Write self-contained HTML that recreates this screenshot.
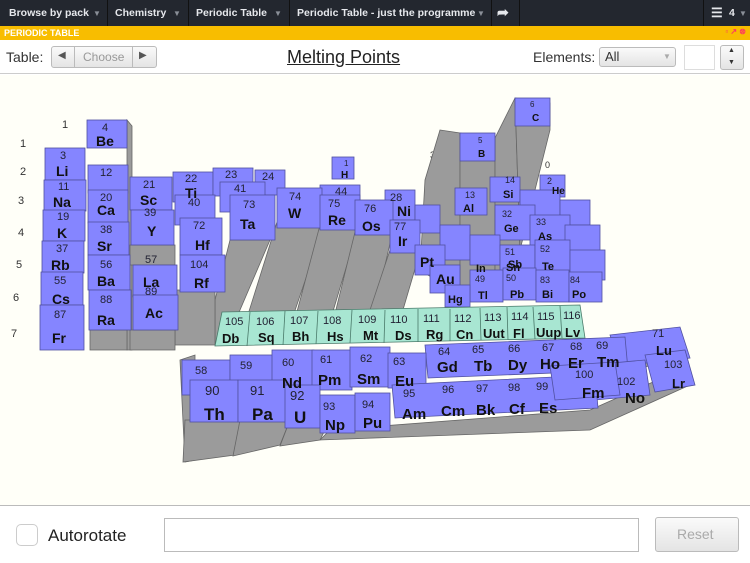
<!DOCTYPE html>
<html><head><meta charset="utf-8"><style>
*{margin:0;padding:0;box-sizing:border-box}
body{width:750px;height:563px;overflow:hidden;background:#fff;font-family:"Liberation Sans",sans-serif;position:relative}
.top{position:absolute;left:0;top:0;width:750px;height:26px;background:#23272f;color:#e6e8ec;font-size:10.5px;font-weight:bold}
.top span{position:absolute;top:7px}
.sep{position:absolute;top:0;width:1px;height:26px;background:#111}
.tri{color:#8a8f98;font-size:8px}
.bar{position:absolute;left:0;top:26px;width:750px;height:14px;background:#f8bd00;color:#fff;font-size:9px;font-weight:bold;padding:2px 0 0 4px}
.tb{position:absolute;left:0;top:40px;width:750px;height:34px;background:#fff;border-bottom:1px solid #ccc;font-size:14px;color:#333}
.canvas{position:absolute;left:0;top:75px;width:750px;height:431px;background:#fffff8;border-bottom:1px solid #bbb}
.foot{position:absolute;left:0;top:507px;width:750px;height:56px;background:#fff}
.btn{position:absolute;border:1px solid #bbb;border-radius:3px;background:linear-gradient(#fafafa,#e4e4e4)}
svg text{font-family:"Liberation Sans",sans-serif}
.n{font-size:11px;fill:#223}
.s{font-size:15px;font-weight:bold;fill:#111}
</style></head><body>
<div class="top">
<span style="left:9px">Browse by pack</span><span class="tri" style="left:93px;top:9px">▼</span><div class="sep" style="left:107px"></div>
<span style="left:115px">Chemistry</span><span class="tri" style="left:173px;top:9px">▼</span><div class="sep" style="left:188px"></div>
<span style="left:196px">Periodic Table</span><span class="tri" style="left:274px;top:9px">▼</span><div class="sep" style="left:289px"></div>
<span style="left:297px">Periodic Table - just the programme</span><span class="tri" style="left:477px;top:9px">▼</span><div class="sep" style="left:491px"></div>
<span style="left:497px;top:4px;font-size:14px">➦</span><div class="sep" style="left:519px"></div>
<div class="sep" style="left:703px"></div>
<span style="left:711px;top:5px;font-size:13px">☰</span><span style="left:729px">4</span><span class="tri" style="left:739px;top:9px">▼</span>
</div>
<div class="bar">PERIODIC TABLE<span style="position:absolute;right:4px;top:1px;color:#f36;font-size:8px">▫ ↗ ⊗</span></div>
<div class="tb">
<span style="position:absolute;left:6px;top:9px">Table:</span>
<div class="btn" style="left:51px;top:6px;width:106px;height:22px"></div>
<div style="position:absolute;left:74px;top:7px;width:1px;height:20px;background:#bbb"></div>
<div style="position:absolute;left:132px;top:7px;width:1px;height:20px;background:#bbb"></div>
<span style="position:absolute;left:58px;top:10px;font-size:10px;color:#555">◀</span>
<span style="position:absolute;left:83px;top:10px;font-size:12px;color:#999">Choose</span>
<span style="position:absolute;left:139px;top:10px;font-size:10px;color:#555">▶</span>
<span style="position:absolute;left:287px;top:7px;font-size:18px;color:#222;text-decoration:underline">Melting Points</span>
<span style="position:absolute;left:533px;top:9px">Elements:</span>
<div class="btn" style="left:599px;top:7px;width:77px;height:20px"></div>
<span style="position:absolute;left:605px;top:9px;font-size:13px">All</span>
<span style="position:absolute;left:663px;top:12px;font-size:8px;color:#aaa">▼</span>
<div style="position:absolute;left:684px;top:5px;width:31px;height:25px;border:1px solid #ddd"></div>
<div class="btn" style="left:720px;top:5px;width:24px;height:25px"></div>
<span style="position:absolute;left:728px;top:7px;font-size:7px">▲</span>
<span style="position:absolute;left:728px;top:19px;font-size:7px">▼</span>
</div>
<div class="canvas">
<svg width="750" height="431" viewBox="0 75 750 431">
<g font-size="11" fill="#333">
<text x="62" y="128">1</text><text x="20" y="147">1</text><text x="20" y="175">2</text><text x="18" y="204">3</text><text x="18" y="236">4</text><text x="16" y="268">5</text><text x="13" y="301">6</text><text x="11" y="337">7</text>
<text x="430" y="158" font-size="9">3</text><text x="545" y="168" font-size="9">0</text>
</g>
<g fill="#9b9b9b" stroke="#666" stroke-width="0.8">
<!-- tall columns -->
<polygon points="127,120 127,350 132,350 132,126"/>
<polygon points="230,240 270,240 225,345 215,345 215,300"/>
<polygon points="277,222 325,222 285,340 240,340"/>
<polygon points="320,225 358,228 325,338 290,338"/>
<polygon points="355,232 392,235 370,330 330,334"/>
<polygon points="390,250 420,252 400,320 365,325"/>
<polygon points="440,130 460,133 460,295 420,270 425,180"/>
<polygon points="460,133 495,138 495,290 460,295"/>
<polygon points="495,138 515,98 520,250 495,290"/>
<polygon points="515,98 550,103 550,130 520,250"/>
<polygon points="180,360 195,355 195,460 185,462"/>
<polygon points="185,420 240,420 235,455 183,462"/>
<polygon points="240,420 290,420 280,445 233,456"/>
<polygon points="290,420 330,420 320,440 280,446"/>
<polygon points="330,430 590,410 680,370 690,385 590,430 320,440"/>
<polygon points="640,345 660,335 660,360 640,370"/>
<polygon points="130,245 175,245 175,265 130,265"/>
<polygon points="175,290 215,290 215,345 175,345"/>
<polygon points="130,330 175,330 175,350 130,350"/>
<polygon points="90,330 127,330 127,350 90,350"/>
</g>
<g stroke="#5050a0" stroke-width="0.8" fill="#8585ff">
<rect x="87" y="120" width="40" height="28"/>
<rect x="332" y="157" width="22" height="22"/>
<rect x="460" y="133" width="35" height="28"/>
<rect x="515" y="98" width="35" height="28"/>
<rect x="540" y="175" width="25" height="22"/>
<rect x="490" y="177" width="30" height="25"/>
<rect x="455" y="188" width="32" height="27"/>
<rect x="45" y="148" width="40" height="32"/>
<rect x="88" y="165" width="40" height="28"/>
<rect x="130" y="177" width="42" height="33"/>
<rect x="173" y="172" width="40" height="30"/>
<rect x="213" y="168" width="40" height="28"/>
<rect x="255" y="170" width="30" height="25"/>
<rect x="320" y="185" width="40" height="30"/>
<rect x="385" y="190" width="30" height="30"/>
<rect x="415" y="205" width="25" height="28"/>
<rect x="520" y="190" width="40" height="30"/>
<rect x="560" y="200" width="30" height="25"/>
<rect x="44" y="180" width="42" height="31"/>
<rect x="88" y="190" width="40" height="33"/>
<rect x="175" y="195" width="40" height="30"/>
<rect x="220" y="182" width="45" height="30"/>
<rect x="131" y="210" width="43" height="35"/>
<rect x="495" y="205" width="40" height="35"/>
<rect x="530" y="215" width="40" height="35"/>
<rect x="565" y="225" width="35" height="30"/>
<rect x="440" y="225" width="30" height="35"/>
<rect x="470" y="235" width="30" height="30"/>
<rect x="43" y="210" width="42" height="31"/>
<rect x="88" y="222" width="41" height="33"/>
<rect x="180" y="218" width="42" height="37"/>
<rect x="230" y="195" width="45" height="45"/>
<rect x="277" y="188" width="45" height="40"/>
<rect x="320" y="195" width="40" height="35"/>
<rect x="355" y="200" width="38" height="35"/>
<rect x="390" y="220" width="30" height="33"/>
<rect x="415" y="245" width="30" height="30"/>
<rect x="500" y="245" width="35" height="35"/>
<rect x="535" y="240" width="35" height="35"/>
<rect x="570" y="250" width="35" height="30"/>
<rect x="42" y="241" width="42" height="32"/>
<rect x="88" y="255" width="42" height="35"/>
<rect x="133" y="265" width="44" height="32"/>
<rect x="180" y="255" width="45" height="37"/>
<rect x="430" y="265" width="30" height="28"/>
<rect x="470" y="270" width="33" height="32"/>
<rect x="503" y="268" width="33" height="32"/>
<rect x="536" y="270" width="33" height="32"/>
<rect x="569" y="272" width="33" height="30"/>
<rect x="445" y="285" width="25" height="22"/>
<rect x="41" y="272" width="42" height="33"/>
<rect x="133" y="295" width="45" height="35"/>
<rect x="40" y="305" width="44" height="45"/>
<rect x="89" y="290" width="42" height="40"/>
</g>
<g fill="#a8e6d2" stroke="#4a7a6a" stroke-width="0.8">
<polygon points="222,312 580,305 585,338 215,346"/>
</g>
<g stroke="#4a7a6a" stroke-width="0.8">
<line x1="250" y1="312" x2="247" y2="346"/><line x1="285" y1="311" x2="283" y2="345"/><line x1="318" y1="311" x2="316" y2="344"/><line x1="352" y1="310" x2="350" y2="343"/><line x1="385" y1="310" x2="384" y2="343"/><line x1="418" y1="309" x2="418" y2="342"/><line x1="450" y1="309" x2="450" y2="341"/><line x1="480" y1="308" x2="481" y2="340"/><line x1="507" y1="307" x2="508" y2="340"/><line x1="533" y1="307" x2="535" y2="339"/><line x1="560" y1="306" x2="562" y2="338"/>
</g>
<g class="n" font-size="11" fill="#334">
<text x="225" y="325">105</text><text x="256" y="325">106</text><text x="290" y="324">107</text><text x="323" y="324">108</text><text x="358" y="323">109</text><text x="390" y="323">110</text><text x="423" y="322">111</text><text x="454" y="322">112</text><text x="484" y="321">113</text><text x="511" y="320">114</text><text x="537" y="320">115</text><text x="563" y="319">116</text>
</g>
<g font-size="13" font-weight="bold" fill="#111">
<text x="222" y="343">Db</text><text x="258" y="342">Sq</text><text x="292" y="341">Bh</text><text x="327" y="341">Hs</text><text x="363" y="340">Mt</text><text x="395" y="340">Ds</text><text x="426" y="339">Rg</text><text x="456" y="339">Cn</text><text x="483" y="338">Uut</text><text x="513" y="338">Fl</text><text x="536" y="337">Uup</text><text x="565" y="337">Lv</text>
</g>
<!-- f-block -->
<g stroke="#5050a0" stroke-width="0.8" fill="#8585ff">
<polygon points="610,335 680,327 690,358 620,366"/>
<polygon points="645,355 685,350 695,385 655,392"/>
<polygon points="425,345 625,337 628,370 428,378"/>
<polygon points="590,365 645,360 650,395 595,400"/>
<rect x="182" y="360" width="48" height="35"/>
<rect x="230" y="355" width="45" height="35"/>
<rect x="272" y="350" width="42" height="40"/>
<rect x="312" y="350" width="40" height="40"/>
<rect x="350" y="347" width="40" height="40"/>
<rect x="388" y="353" width="38" height="35"/>
<rect x="190" y="380" width="48" height="42"/>
<rect x="238" y="380" width="48" height="42"/>
<rect x="285" y="385" width="35" height="43"/>
<rect x="320" y="395" width="35" height="38"/>
<rect x="355" y="393" width="35" height="38"/>
<polygon points="392,385 595,375 598,408 395,418"/>
<polygon points="550,366 615,362 620,395 555,400"/>
</g>
<g font-size="11" fill="#223">
<text x="195" y="374">58</text><text x="240" y="369">59</text><text x="282" y="366">60</text><text x="320" y="363">61</text><text x="360" y="362">62</text><text x="393" y="365">63</text>
<text x="438" y="355">64</text><text x="472" y="353">65</text><text x="508" y="352">66</text><text x="542" y="351">67</text><text x="570" y="350">68</text><text x="596" y="349">69</text><text x="652" y="337">71</text><text x="664" y="368">103</text>
<text x="205" y="395" font-size="13">90</text><text x="250" y="395" font-size="13">91</text><text x="290" y="400" font-size="13">92</text><text x="323" y="410">93</text><text x="362" y="408">94</text><text x="403" y="397">95</text><text x="442" y="393">96</text><text x="476" y="392">97</text><text x="508" y="391">98</text><text x="536" y="390">99</text><text x="575" y="378">100</text><text x="617" y="385">102</text>
</g>
<g font-size="15" font-weight="bold" fill="#111">
<text x="282" y="388">Nd</text><text x="318" y="385">Pm</text><text x="357" y="384">Sm</text><text x="395" y="386">Eu</text>
<text x="437" y="372">Gd</text><text x="474" y="371">Tb</text><text x="508" y="370">Dy</text><text x="540" y="369">Ho</text><text x="568" y="368">Er</text><text x="597" y="367">Tm</text><text x="656" y="355" font-size="13">Lu</text><text x="672" y="388" font-size="13">Lr</text>
<text x="204" y="420" font-size="17">Th</text><text x="252" y="420" font-size="17">Pa</text><text x="294" y="423" font-size="17">U</text><text x="325" y="430">Np</text><text x="363" y="428">Pu</text><text x="402" y="419">Am</text><text x="441" y="416">Cm</text><text x="476" y="415">Bk</text><text x="509" y="414">Cf</text><text x="539" y="413">Es</text><text x="582" y="398">Fm</text><text x="625" y="403">No</text>
</g>
<!-- main tile labels -->
<g font-size="11" fill="#223">
<text x="102" y="131">4</text><text x="344" y="166" font-size="8">1</text><text x="478" y="143" font-size="8">5</text><text x="530" y="107" font-size="8">6</text>
<text x="60" y="159">3</text><text x="100" y="176">12</text><text x="143" y="188">21</text><text x="185" y="182">22</text><text x="225" y="178">23</text><text x="390" y="201">28</text>
<text x="58" y="190">11</text><text x="100" y="201">20</text><text x="188" y="206">40</text><text x="234" y="192">41</text><text x="262" y="180">24</text><text x="335" y="195">44</text>
<text x="57" y="220">19</text><text x="144" y="216">39</text><text x="100" y="233">38</text><text x="193" y="229">72</text><text x="243" y="208">73</text><text x="289" y="200">74</text><text x="328" y="207">75</text><text x="364" y="212">76</text><text x="394" y="230">77</text><text x="465" y="198" font-size="9">13</text><text x="505" y="183" font-size="9">14</text><text x="547" y="184" font-size="9">2</text>
<text x="56" y="252">37</text><text x="100" y="268">56</text><text x="145" y="263">57</text><text x="190" y="268">104</text><text x="502" y="217" font-size="9">32</text><text x="536" y="225" font-size="9">33</text><text x="505" y="255" font-size="9">51</text><text x="540" y="252" font-size="9">52</text>
<text x="54" y="284">55</text><text x="100" y="303">88</text><text x="145" y="295">89</text><text x="475" y="282" font-size="9">49</text><text x="506" y="281" font-size="9">50</text><text x="478" y="280" font-size="9"></text><text x="540" y="283" font-size="9">83</text><text x="570" y="283" font-size="9">84</text>
<text x="54" y="318">87</text>
</g>
<g font-size="14" font-weight="bold" fill="#111">
<text x="96" y="146">Be</text><text x="341" y="178" font-size="10">H</text><text x="478" y="157" font-size="10">B</text><text x="532" y="121" font-size="10">C</text>
<text x="56" y="176">Li</text><text x="53" y="207">Na</text><text x="97" y="215">Ca</text><text x="140" y="205">Sc</text><text x="185" y="198">Ti</text><text x="57" y="238">K</text><text x="147" y="236">Y</text><text x="97" y="251">Sr</text><text x="195" y="250">Hf</text><text x="240" y="229">Ta</text><text x="288" y="218">W</text><text x="328" y="225">Re</text><text x="362" y="231">Os</text><text x="398" y="246">Ir</text><text x="420" y="267">Pt</text><text x="436" y="284">Au</text><text x="448" y="303" font-size="11">Hg</text><text x="397" y="216">Ni</text><text x="463" y="212" font-size="11">Al</text><text x="503" y="198" font-size="11">Si</text><text x="552" y="194" font-size="10">He</text><text x="504" y="232" font-size="11">Ge</text><text x="538" y="240" font-size="11">As</text><text x="508" y="268" font-size="11">Sb</text><text x="542" y="270" font-size="11">Te</text>
<text x="51" y="270">Rb</text><text x="97" y="286">Ba</text><text x="143" y="287">La</text><text x="194" y="288">Rf</text><text x="478" y="299" font-size="11">Tl</text><text x="510" y="298" font-size="11">Pb</text><text x="542" y="298" font-size="11">Bi</text><text x="572" y="298" font-size="11">Po</text><text x="476" y="272" font-size="11">In</text><text x="506" y="271" font-size="11">Sn</text>
<text x="52" y="304">Cs</text><text x="97" y="325">Ra</text><text x="145" y="318">Ac</text><text x="52" y="343">Fr</text>
</g>
</svg>
</div>
<div class="foot">
<div style="position:absolute;left:16px;top:17px;width:22px;height:22px;border:1px solid #ccc;border-radius:5px"></div>
<span style="position:absolute;left:48px;top:19px;font-size:17px;color:#222">Autorotate</span>
<div style="position:absolute;left:164px;top:11px;width:475px;height:34px;border:1px solid #bbb"></div>
<div class="btn" style="left:655px;top:10px;width:84px;height:35px"></div>
<span style="position:absolute;left:677px;top:19px;font-size:14px;color:#aaa">Reset</span>
</div>
</body></html>
